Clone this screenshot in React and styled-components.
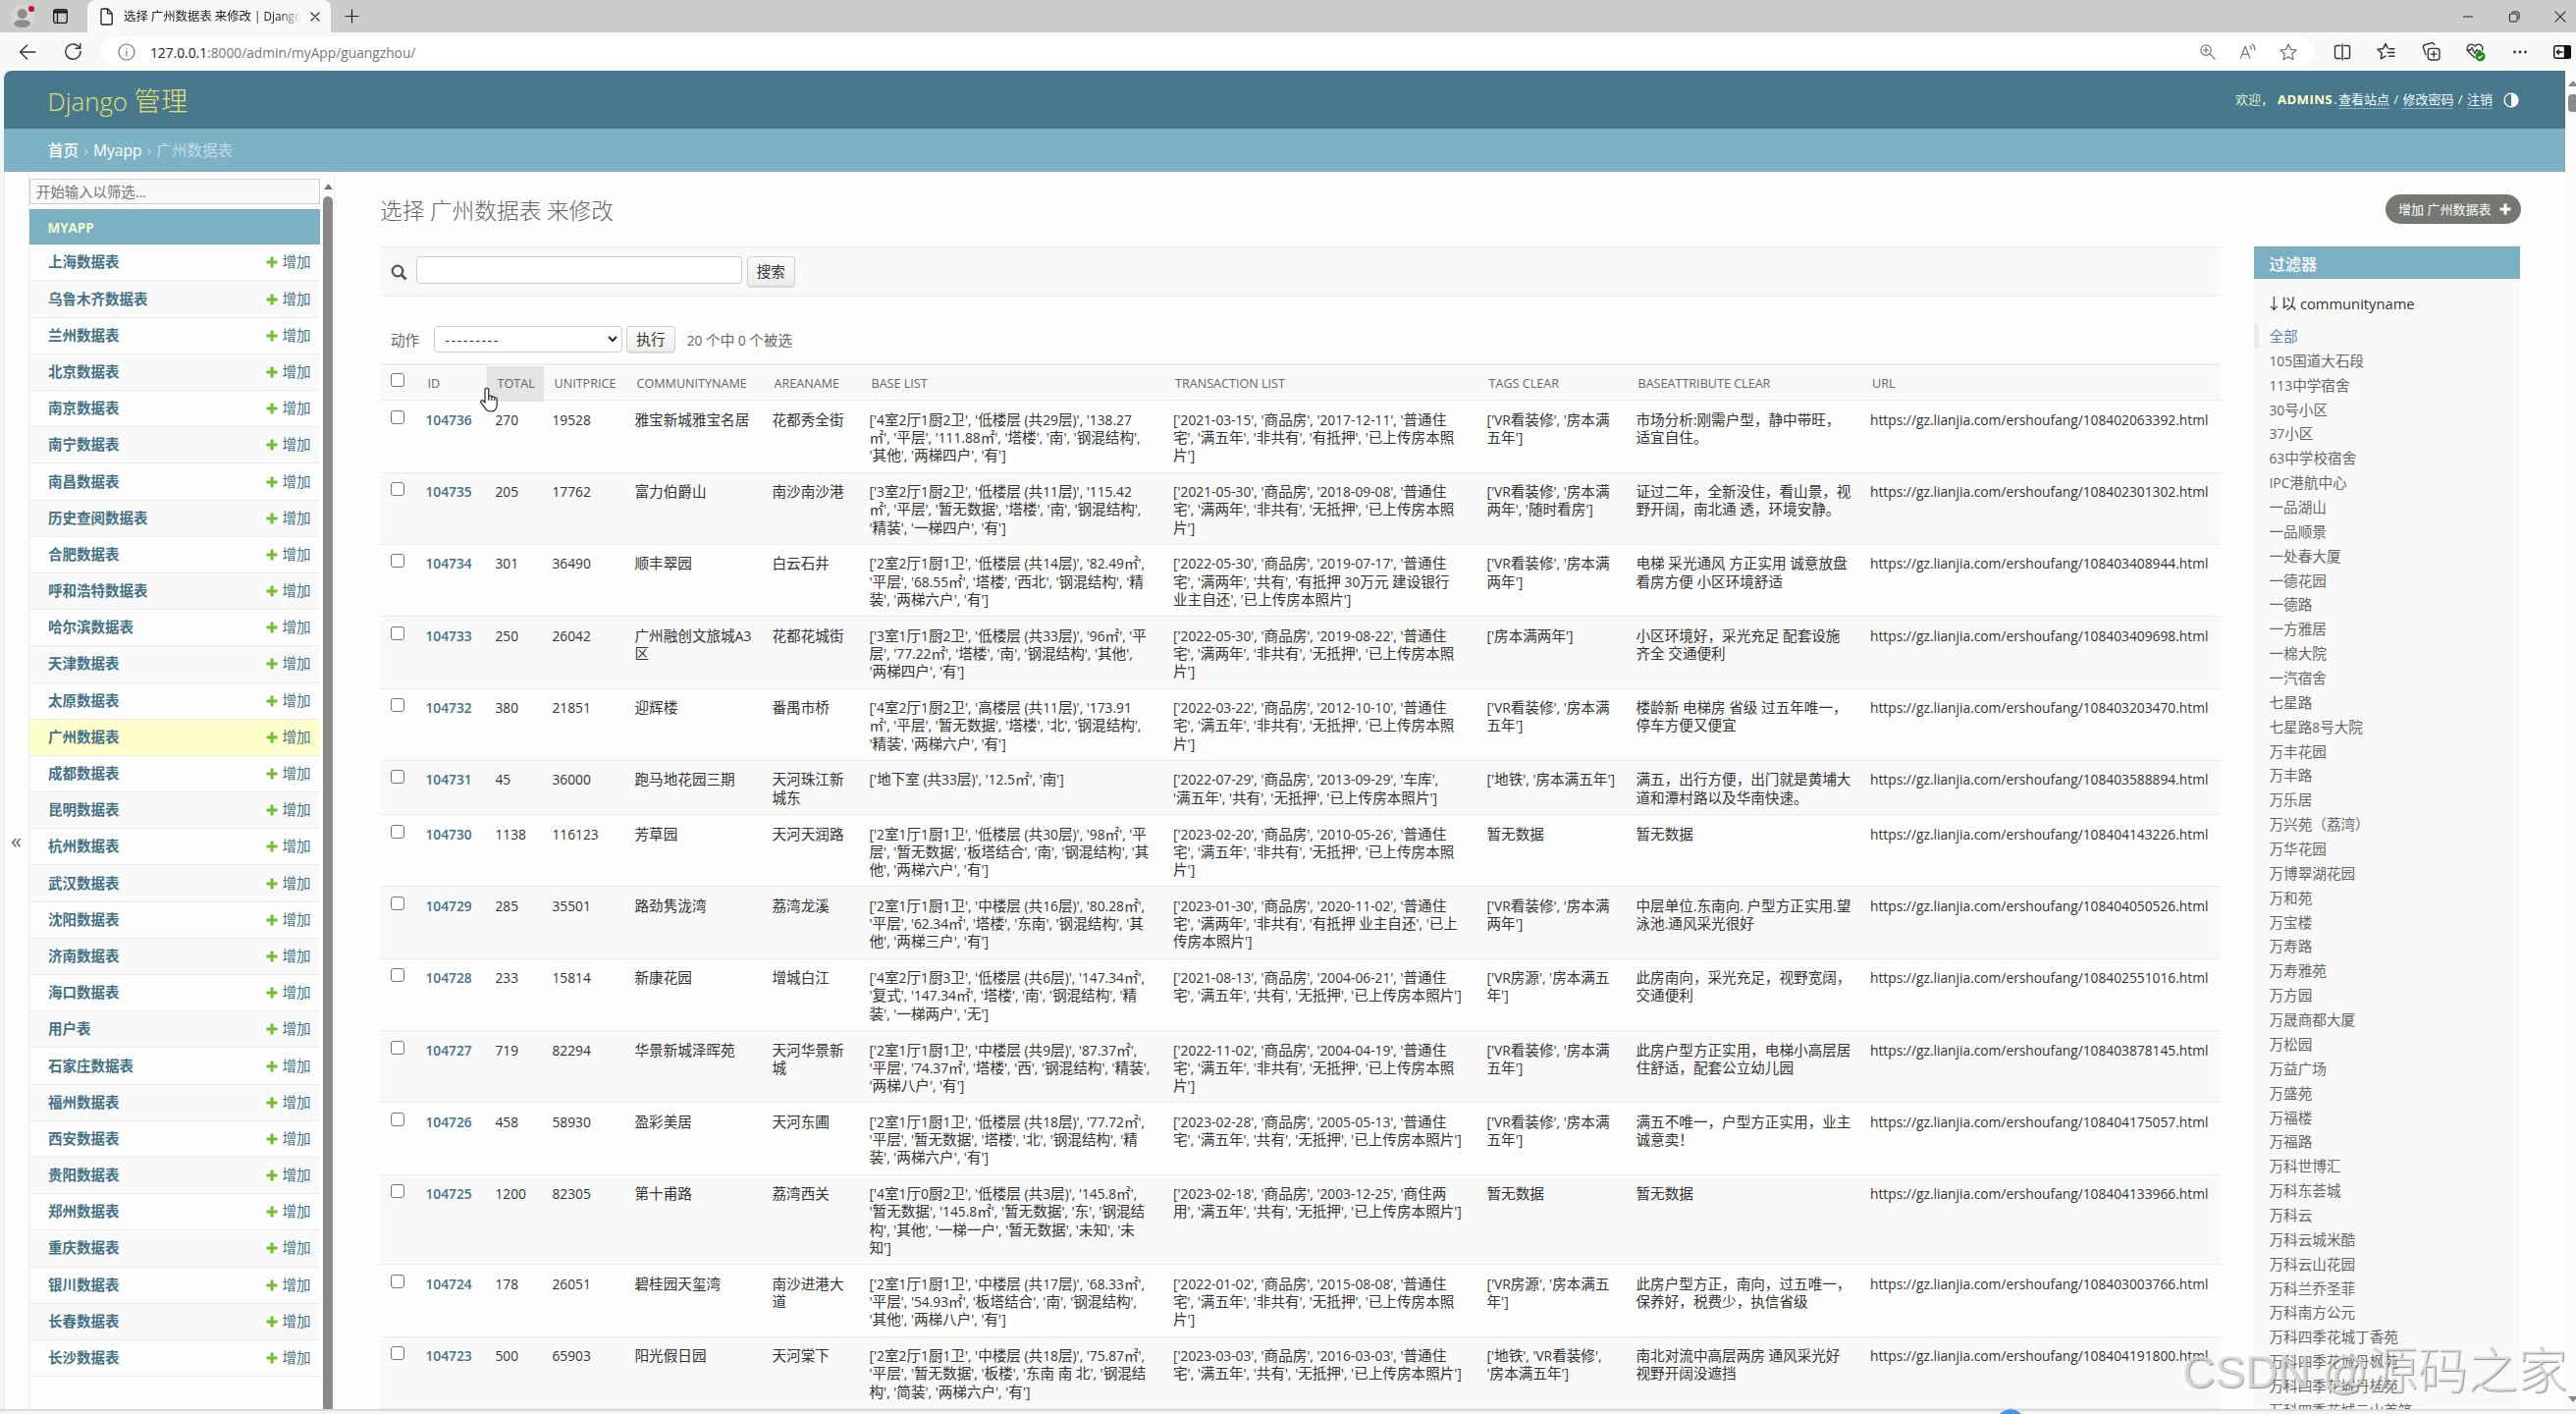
import React, { useState } from "react";
import styled, { createGlobalStyle } from "styled-components";

const GlobalStyle = createGlobalStyle`
  * {
    box-sizing: border-box;
  }
  body {
    margin: 0;
    background: #fdfefd;
    font-family: "Open Sans", "Noto Sans CJK SC", sans-serif;
    font-size: 14.6px;
    color: #333;
  }
  button, input, select {
    font-family: inherit;
  }
`;

const Window = styled.div`
  width: 2624px;
  height: 1440px;
  overflow: hidden;
  display: flex;
  flex-direction: column;
  background: #f5f7f5;
  position: relative;
`;

/* ---------- browser ---------- */

const TabStrip = styled.div`
  height: 33px;
  flex: none;
  display: flex;
  align-items: center;
  background: #cbcdca;
`;

const ProfileIcon = styled.svg`
  margin-left: 10px;
`;

const TabActionsIcon = styled.svg`
  margin-left: 18px;
`;

const BrowserTab = styled.div`
  width: 248px;
  height: 33px;
  margin-left: 20px;
  padding-left: 13px;
  display: flex;
  align-items: center;
  background: #f7f8f7;
  border-radius: 8px 8px 0 0;
`;

const TabTitle = styled.div`
  width: 182px;
  margin-left: 11px;
  margin-right: 7px;
  white-space: nowrap;
  font-size: 12.4px;
  line-height: 20px;
  color: #222;
  mask-image: linear-gradient(to right, #000 160px, transparent 181px);
`;

const NewTabIcon = styled.svg`
  margin-left: 14px;
`;

const WindowButtons = styled.div`
  margin-left: auto;
  padding-right: 9px;
  display: flex;
  align-items: center;
  gap: 33px;
`;

const Toolbar = styled.div`
  height: 39px;
  flex: none;
  display: flex;
  align-items: center;
  background: #f7f8f7;
  padding: 0 0 0 19px;
`;

const ReloadIcon = styled.svg`
  margin-left: 28px;
`;

const AddressBar = styled.div`
  width: 2254px;
  height: 31px;
  margin-left: 19px;
  padding: 0 17.5px 0 17px;
  border-radius: 16px;
  background: #fff;
  display: flex;
  align-items: center;
`;

const Url = styled.div`
  margin-left: 15px;
  font-size: 14.6px;
  line-height: 20px;
  color: #777;

  b {
    font-weight: 400;
    color: #222;
  }
`;

const AddressIcons = styled.div`
  margin-left: auto;
  display: flex;
  align-items: center;
  gap: 24px;
`;

const ToolbarIcons = styled.div`
  margin-left: 19.5px;
  display: flex;
  align-items: center;
  gap: 26.5px;
`;

const Viewport = styled.div`
  height: 1363px;
  flex: none;
  margin-left: 4px;
  display: flex;
  overflow: hidden;
  border-radius: 8px 0 0 0;
  background: #fdfefd;
`;

const PageScroll = styled.div`
  width: 11px;
  padding: 10px 0 7px 3px;
  display: flex;
  flex-direction: column;
  align-items: flex-start;
  gap: 8px;
  background: #fafbfa;
`;

const PageThumb = styled.div`
  width: 10px;
  height: 18px;
  border-radius: 4px;
  background: #888a88;
  margin-bottom: auto;
`;

const BottomEdge = styled.div`
  height: 5px;
  flex: none;
  border-top: 2px solid #d9dbd9;
  background: #f4f5f4;
`;

/* ---------- site ---------- */

const Site = styled.div`
  width: 2609px;
  flex: none;
  display: flex;
  flex-direction: column;
`;

const Header = styled.header`
  height: 59px;
  flex: none;
  padding: 0 47px 0 44.5px;
  display: flex;
  align-items: center;
  justify-content: space-between;
  background: #47788d;
`;

const SiteName = styled.h1`
  margin: 2px 0 0;
  font-weight: 300;
  font-size: 27.3px;
  line-height: 36px;
  color: #e6df6e;
`;

const UserTools = styled.div`
  display: flex;
  align-items: center;
  font-size: 13px;
  line-height: 17px;
  color: #ffc;
  white-space: pre;
`;

const Welcome = styled.span`
  color: #dff0c8;
`;

const UserName = styled.strong`
  margin-left: 4px;
  font-size: 13.2px;
  letter-spacing: 0.4px;
`;

const Separator = styled.span`
  width: ${(p) => p.$width}px;
  text-align: center;
`;

const ToolLink = styled.a`
  color: #f2fbfa;
  border-bottom: 1px solid #8fb0bd;
`;

const ThemeIcon = styled.svg`
  margin-left: 11px;
`;

const Breadcrumbs = styled.div`
  height: 44px;
  flex: none;
  padding: 0 45px;
  display: flex;
  align-items: center;
  gap: 5px;
  background: #7db2c5;
  color: #c4dce8;
  font-size: 15.6px;
  line-height: 22px;

  a {
    color: #fff;
    font-weight: 500;
  }
`;

const Main = styled.div`
  flex: 1;
  min-height: 0;
  display: flex;
`;

const NavToggle = styled.button`
  width: 26px;
  flex: none;
  padding: 100px 1px 0 0;
  border: 0;
  border-left: 1px solid #eceeec;
  border-right: 1px solid #e8eae8;
  background: #fdfefd;
  color: #667;
  font-size: 22px;
`;

const Nav = styled.nav`
  width: 311px;
  flex: none;
  display: flex;
  border-right: 1px solid #ecedec;
`;

const NavBody = styled.div`
  width: 296px;
  flex: none;
  padding-top: 7px;
`;

const NavFilter = styled.input`
  display: block;
  width: 296px;
  height: 26px;
  margin-bottom: 5px;
  padding: 0 6px;
  border: 1px solid #ccc;
  background: #f8f9f8;
  font-size: 14.4px;

  &::placeholder {
    color: #757575;
  }
`;

const NavCaption = styled.div`
  height: 36.3px;
  padding-left: 18.5px;
  background: #7bafc3;
  color: #f0ffcc;
  font-weight: 700;
  font-size: 13.4px;
  line-height: 38px;
`;

const NavItem = styled.div`
  height: 37.2px;
  padding: 0 9.5px 0 19px;
  display: flex;
  align-items: center;
  justify-content: space-between;
  border-bottom: 1px solid #eaebea;
  background: ${(p) => (p.$current ? "#ffffcc" : p.$odd ? "#fdfefd" : "#f8f9f8")};
  color: #447286;
  font-size: 14.5px;
  line-height: 20px;
`;

const NavName = styled.a`
  font-weight: 700;
`;

const NavAdd = styled.a`
  display: flex;
  align-items: center;
  gap: 5px;
`;

const NavScroll = styled.div`
  width: 14px;
  padding: 12px 0 0 2px;
  display: flex;
  flex-direction: column;
  align-items: center;
  gap: 7px;
`;

const NavThumb = styled.div`
  flex: 1;
  width: 10px;
  border-radius: 5px 5px 0 0;
  background: #888a88;
`;

const Content = styled.main`
  flex: 1;
  min-width: 0;
  padding: 0 44px 0 46px;
`;

const TitleRow = styled.div`
  height: 76px;
  padding-right: 1px;
  display: flex;
  justify-content: space-between;
`;

const Title = styled.h2`
  margin: 23px 0 0;
  font-weight: 300;
  font-size: 22.7px;
  line-height: 34px;
  color: #666;
`;

const AddButton = styled.a`
  width: 138px;
  height: 30px;
  margin-top: 22.5px;
  padding: 0 10px 0 13px;
  display: flex;
  align-items: center;
  justify-content: space-between;
  border-radius: 15px;
  background: #757773;
  color: #fff;
  font-size: 13px;
  white-space: nowrap;
`;

const Columns = styled.div`
  display: flex;
  gap: 34px;
  align-items: flex-start;
`;

const ChangeList = styled.section`
  width: 1874.5px;
  flex: none;
`;

const SearchBar = styled.div`
  height: 51px;
  padding: 9px 12px 0 11px;
  display: flex;
  align-items: flex-start;
  border-top: 1px solid #eaebea;
  border-bottom: 1.5px solid #eaebea;
  background: #f8f9f8;
`;

const SearchIcon = styled.svg`
  margin: 8px 9px 0 0;
`;

const SearchInput = styled.input`
  width: 332px;
  height: 28px;
  border: 1px solid #ccc;
  border-radius: 4px;
  background: #fff;
`;

const SmallButton = styled.button`
  width: ${(p) => p.$width}px;
  height: ${(p) => p.$height}px;
  margin-left: 4.5px;
  padding: 0 0 2px;
  border: 1px solid #cfd0cf;
  border-radius: 4px;
  background: linear-gradient(#fbfcfb, #ebedeb);
  box-shadow: 0 1px 1px rgba(0, 0, 0, 0.12);
  color: #333;
  font-size: 14.6px;
`;

const Actions = styled.div`
  height: 68px;
  padding: 19px 11px 0;
  display: flex;
  align-items: center;
  color: #666;
  line-height: 20px;
`;

const ActionSelect = styled.div`
  width: 191.5px;
  height: 27px;
  margin-left: 15px;
  padding: 0 4px 0 10px;
  display: flex;
  align-items: center;
  justify-content: space-between;
  border: 1px solid #ccc;
  border-radius: 4px;
  background: #fff;
  color: #333;
  letter-spacing: 1.5px;
`;

const Counter = styled.span`
  margin-left: 12px;
`;

const GridRow = styled.div`
  display: grid;
  grid-template-columns: 37.5px 71px 58px 84px 140px 99px 309.5px 319.5px 152px 238.5px 365.5px;
`;

const HeadRow = styled(GridRow)`
  height: 38.2px;
  padding-top: 1px;
  border-top: 2px solid #edeeed;
  border-bottom: 1.5px solid #eaebea;
  background: #f8f9f8;
`;

const HeadCell = styled.div`
  padding-left: 11px;
  background: ${(p) => (p.$hover ? "#e3e5e3" : "none")};
  color: #666;
  font-weight: 400;
  font-size: 12.6px;
  line-height: 36px;
  white-space: nowrap;
`;

const BodyRow = styled(GridRow)`
  height: ${(p) => p.$lines * 18.25 + 18.6}px;
  border-bottom: 1.4px solid #e9ebe9;
  background: ${(p) => (p.$odd ? "#fdfefd" : "#f8f9f8")};
`;

const Cell = styled.div`
  padding: 9.5px 0 0 9px;
  font-size: 14.6px;
  line-height: 18.25px;
  white-space: pre;
`;

const IdCell = styled(Cell)`
  color: #447286;
  font-weight: 600;
`;

const Check = styled.input.attrs({ type: "checkbox" })`
  appearance: none;
  display: block;
  width: 14px;
  height: 14px;
  margin: ${(p) => p.$top}px 0 0 11px;
  border: 1px solid #777;
  border-radius: 3px;
  background: #fff;
`;

const FilterPanel = styled.aside`
  width: 271.5px;
  height: 1184px;
  flex: none;
  overflow: hidden;
  background: #f8f9f8;
`;

const FilterHead = styled.div`
  height: 33px;
  padding-left: 16px;
  background: #7bafc3;
  color: #fff;
  font-size: 16.3px;
  font-weight: 500;
  line-height: 36px;
`;

const FilterTitle = styled.div`
  padding: 14px 0 10px 16px;
  font-size: 15.6px;
  line-height: 22px;
  color: #333;
`;

const DownArrow = styled.span`
  display: inline-block;
  width: 9px;
  margin-right: 3px;
  text-indent: -3px;
`;

const FilterItem = styled.a`
  display: block;
  height: 24.86px;
  padding-left: ${(p) => (p.$selected ? 11 : 16)}px;
  border-left: ${(p) => (p.$selected ? "5px solid #e9ebe9" : "0")};
  color: ${(p) => (p.$selected ? "#5b80b2" : "#666")};
  font-size: 14.6px;
  line-height: 24.8px;
  white-space: nowrap;
`;

/* ---------- overlays ---------- */

const Pointer = styled.svg`
  position: absolute;
  left: 488px;
  top: 394px;
`;

const Watermark = styled.div`
  position: absolute;
  left: 2223px;
  top: 1360px;
  display: flex;
  gap: 12px;
  font-family: "Liberation Sans", "Noto Sans CJK SC", sans-serif;
  font-size: 50.8px;
  font-weight: 300;
  line-height: 74px;
  white-space: nowrap;
  color: rgba(232, 233, 232, 0.75);
  text-shadow: 1px 1px 1px rgba(110, 110, 110, 0.75);
`;

const WatermarkLatin = styled.span`
  font-size: 46px;
`;

const BlueDot = styled.div`
  position: absolute;
  left: 2033px;
  top: 1434px;
  width: 30px;
  height: 30px;
  border: 1px solid #e6effa;
  border-radius: 50%;
  background: #4a8fe8;
`;

/* Latin glyphs run a little wide beside the Chinese ones, so they are set smaller.
   The short line-height keeps them from stretching the line. */
const Latin = styled.span`
  font-size: 0.944em;
  line-height: 1;
`;

const Mixed = ({ children }) =>
  children
    .split(/([\x20-\x7e]+)/)
    .filter(Boolean)
    .map((part, i) => (/^[\x20-\x7e]/.test(part) ? <Latin key={i}>{part}</Latin> : part));

const navItems = [
  "上海数据表", "乌鲁木齐数据表", "兰州数据表", "北京数据表", "南京数据表", "南宁数据表",
  "南昌数据表", "历史查阅数据表", "合肥数据表", "呼和浩特数据表", "哈尔滨数据表", "天津数据表",
  "太原数据表", "广州数据表", "成都数据表", "昆明数据表", "杭州数据表", "武汉数据表",
  "沈阳数据表", "济南数据表", "海口数据表", "用户表", "石家庄数据表", "福州数据表",
  "西安数据表", "贵阳数据表", "郑州数据表", "重庆数据表", "银川数据表", "长春数据表",
  "长沙数据表",
];

const headers = [
  "ID", "TOTAL", "UNITPRICE", "COMMUNITYNAME", "AREANAME", "BASE LIST",
  "TRANSACTION LIST", "TAGS CLEAR", "BASEATTRIBUTE CLEAR", "URL",
];

const rows = [
  ["104736", "270", "19528", "雅宝新城雅宝名居", "花都秀全街",
    "['4室2厅1厨2卫', '低楼层 (共29层)', '138.27\n㎡', '平层', '111.88㎡', '塔楼', '南', '钢混结构',\n'其他', '两梯四户', '有']",
    "['2021-03-15', '商品房', '2017-12-11', '普通住\n宅', '满五年', '非共有', '有抵押', '已上传房本照\n片']",
    "['VR看装修', '房本满\n五年']", "市场分析:刚需户型，静中带旺，\n适宜自住。", "108402063392"],
  ["104735", "205", "17762", "富力伯爵山", "南沙南沙港",
    "['3室2厅1厨2卫', '低楼层 (共11层)', '115.42\n㎡', '平层', '暂无数据', '塔楼', '南', '钢混结构',\n'精装', '一梯四户', '有']",
    "['2021-05-30', '商品房', '2018-09-08', '普通住\n宅', '满两年', '非共有', '无抵押', '已上传房本照\n片']",
    "['VR看装修', '房本满\n两年', '随时看房']", "证过二年，全新没住，看山景，视\n野开阔，南北通 透，环境安静。", "108402301302"],
  ["104734", "301", "36490", "顺丰翠园", "白云石井",
    "['2室2厅1厨1卫', '低楼层 (共14层)', '82.49㎡',\n'平层', '68.55㎡', '塔楼', '西北', '钢混结构', '精\n装', '两梯六户', '有']",
    "['2022-05-30', '商品房', '2019-07-17', '普通住\n宅', '满两年', '共有', '有抵押 30万元 建设银行\n业主自还', '已上传房本照片']",
    "['VR看装修', '房本满\n两年']", "电梯 采光通风 方正实用 诚意放盘\n看房方便 小区环境舒适", "108403408944"],
  ["104733", "250", "26042", "广州融创文旅城A3\n区", "花都花城街",
    "['3室1厅1厨2卫', '低楼层 (共33层)', '96㎡', '平\n层', '77.22㎡', '塔楼', '南', '钢混结构', '其他',\n'两梯四户', '有']",
    "['2022-05-30', '商品房', '2019-08-22', '普通住\n宅', '满两年', '非共有', '无抵押', '已上传房本照\n片']",
    "['房本满两年']", "小区环境好，采光充足 配套设施\n齐全 交通便利", "108403409698"],
  ["104732", "380", "21851", "迎辉楼", "番禺市桥",
    "['4室2厅1厨2卫', '高楼层 (共11层)', '173.91\n㎡', '平层', '暂无数据', '塔楼', '北', '钢混结构',\n'精装', '两梯六户', '有']",
    "['2022-03-22', '商品房', '2012-10-10', '普通住\n宅', '满五年', '非共有', '无抵押', '已上传房本照\n片']",
    "['VR看装修', '房本满\n五年']", "楼龄新 电梯房 省级 过五年唯一，\n停车方便又便宜", "108403203470"],
  ["104731", "45", "36000", "跑马地花园三期", "天河珠江新\n城东",
    "['地下室 (共33层)', '12.5㎡', '南']",
    "['2022-07-29', '商品房', '2013-09-29', '车库',\n'满五年', '共有', '无抵押', '已上传房本照片']",
    "['地铁', '房本满五年']", "满五，出行方便，出门就是黄埔大\n道和潭村路以及华南快速。", "108403588894"],
  ["104730", "1138", "116123", "芳草园", "天河天润路",
    "['2室1厅1厨1卫', '低楼层 (共30层)', '98㎡', '平\n层', '暂无数据', '板塔结合', '南', '钢混结构', '其\n他', '两梯六户', '有']",
    "['2023-02-20', '商品房', '2010-05-26', '普通住\n宅', '满五年', '非共有', '无抵押', '已上传房本照\n片']",
    "暂无数据", "暂无数据", "108404143226"],
  ["104729", "285", "35501", "路劲隽泷湾", "荔湾龙溪",
    "['2室1厅1厨1卫', '中楼层 (共16层)', '80.28㎡',\n'平层', '62.34㎡', '塔楼', '东南', '钢混结构', '其\n他', '两梯三户', '有']",
    "['2023-01-30', '商品房', '2020-11-02', '普通住\n宅', '满两年', '非共有', '有抵押 业主自还', '已上\n传房本照片']",
    "['VR看装修', '房本满\n两年']", "中层单位.东南向. 户型方正实用.望\n泳池.通风采光很好", "108404050526"],
  ["104728", "233", "15814", "新康花园", "增城白江",
    "['4室2厅1厨3卫', '低楼层 (共6层)', '147.34㎡',\n'复式', '147.34㎡', '塔楼', '南', '钢混结构', '精\n装', '一梯两户', '无']",
    "['2021-08-13', '商品房', '2004-06-21', '普通住\n宅', '满五年', '共有', '无抵押', '已上传房本照片']",
    "['VR房源', '房本满五\n年']", "此房南向，采光充足，视野宽阔，\n交通便利", "108402551016"],
  ["104727", "719", "82294", "华景新城泽晖苑", "天河华景新\n城",
    "['2室1厅1厨1卫', '中楼层 (共9层)', '87.37㎡',\n'平层', '74.37㎡', '塔楼', '西', '钢混结构', '精装',\n'两梯八户', '有']",
    "['2022-11-02', '商品房', '2004-04-19', '普通住\n宅', '满五年', '非共有', '无抵押', '已上传房本照\n片']",
    "['VR看装修', '房本满\n五年']", "此房户型方正实用，电梯小高层居\n住舒适，配套公立幼儿园", "108403878145"],
  ["104726", "458", "58930", "盈彩美居", "天河东圃",
    "['2室1厅1厨1卫', '低楼层 (共18层)', '77.72㎡',\n'平层', '暂无数据', '塔楼', '北', '钢混结构', '精\n装', '两梯六户', '有']",
    "['2023-02-28', '商品房', '2005-05-13', '普通住\n宅', '满五年', '共有', '无抵押', '已上传房本照片']",
    "['VR看装修', '房本满\n五年']", "满五不唯一，户型方正实用，业主\n诚意卖！", "108404175057"],
  ["104725", "1200", "82305", "第十甫路", "荔湾西关",
    "['4室1厅0厨2卫', '低楼层 (共3层)', '145.8㎡',\n'暂无数据', '145.8㎡', '暂无数据', '东', '钢混结\n构', '其他', '一梯一户', '暂无数据', '未知', '未\n知']",
    "['2023-02-18', '商品房', '2003-12-25', '商住两\n用', '满五年', '共有', '无抵押', '已上传房本照片']",
    "暂无数据", "暂无数据", "108404133966"],
  ["104724", "178", "26051", "碧桂园天玺湾", "南沙进港大\n道",
    "['2室1厅1厨1卫', '中楼层 (共17层)', '68.33㎡',\n'平层', '54.93㎡', '板塔结合', '南', '钢混结构',\n'其他', '两梯八户', '有']",
    "['2022-01-02', '商品房', '2015-08-08', '普通住\n宅', '满五年', '非共有', '无抵押', '已上传房本照\n片']",
    "['VR房源', '房本满五\n年']", "此房户型方正，南向，过五唯一，\n保养好，税费少，执信省级", "108403003766"],
  ["104723", "500", "65903", "阳光假日园", "天河棠下",
    "['2室2厅1厨1卫', '中楼层 (共18层)', '75.87㎡',\n'平层', '暂无数据', '板楼', '东南 南 北', '钢混结\n构', '简装', '两梯六户', '有']",
    "['2023-03-03', '商品房', '2016-03-03', '普通住\n宅', '满五年', '共有', '无抵押', '已上传房本照片']",
    "['地铁', 'VR看装修',\n'房本满五年']", "南北对流中高层两房 通风采光好\n视野开阔没遮挡", "108404191800"],
];

const filters = [
  "全部", "105国道大石段", "113中学宿舍", "30号小区", "37小区", "63中学校宿舍", "IPC港航中心",
  "一品湖山", "一品顺景", "一处春大厦", "一德花园", "一德路", "一方雅居", "一棉大院", "一汽宿舍",
  "七星路", "七星路8号大院", "万丰花园", "万丰路", "万乐居", "万兴苑（荔湾）", "万华花园",
  "万博翠湖花园", "万和苑", "万宝楼", "万寿路", "万寿雅苑", "万方园", "万晟商都大厦", "万松园",
  "万益广场", "万盛苑", "万福楼", "万福路", "万科世博汇", "万科东荟城", "万科云",
  "万科云城米酷", "万科云山花园", "万科兰乔圣菲", "万科南方公元", "万科四季花城丁香苑",
  "万科四季花城丹枫苑", "万科四季花城丹桂苑", "万科四季花城云山首筑",
];

const lineCount = (row) => Math.max(...row.map((v) => v.split("\n").length), 2);

const Line = ({ size = 18, color = "#333", w = 1.3, children, ...rest }) => (
  <svg width={size} height={size} viewBox="0 0 18 18" fill="none" stroke={color} strokeWidth={w} strokeLinecap="round" strokeLinejoin="round" {...rest}>
    {children}
  </svg>
);

const PlusIcon = ({ size, color }) => (
  <svg width={size} height={size} viewBox="0 0 12 12" fill={color}>
    <path d="M4.5 0.5h3v4h4v3h-4v4h-3v-4h-4v-3h4z" />
  </svg>
);

const Browser = () => (
  <>
    <TabStrip>
      <ProfileIcon width="26" height="26" viewBox="0 0 26 26">
        <circle cx="13" cy="13" r="12" fill="#d5d6d4" />
        <circle cx="12.7" cy="10" r="5" fill="#8f8d8b" />
        <path d="M4.5 20c0-3 4-3.700 8.200-3.700s8.200.7 8.200 3.700c0 2.500-4 4-8.200 4s-8.200-1.500-8.200-4z" fill="#8f8d8b" />
        <circle cx="22" cy="5" r="3.100" fill="#c3142d" />
      </ProfileIcon>
      <TabActionsIcon width="15" height="15" viewBox="0 0 15 15" fill="none" stroke="#1d1d1d" strokeWidth="1.300">
        <rect x="0.700" y="0.700" width="13.600" height="13.600" rx="2" />
        <path d="M1 2.500h13M4.500 4v10" />
        <path d="M1 3h13" strokeWidth="3" />
      </TabActionsIcon>
      <BrowserTab>
        <svg width="13" height="18" viewBox="0 0 13 18" fill="none" stroke="#222" strokeWidth="1.300" strokeLinejoin="round">
          <path d="M2.200 1h5.600l4.400 4.600v10.200a1.200 1.200 0 0 1-1.200 1.200H2.200A1.200 1.200 0 0 1 1 15.800V2.200A1.200 1.200 0 0 1 2.200 1z" />
          <path d="M7.600 1v4.800h4.600" />
        </svg>
        <TabTitle>
          <Mixed>选择 广州数据表 来修改 | Django</Mixed>
        </TabTitle>
        <Line size={12} w={1.9}>
          <path d="M3 3l12 12M15 3L3 15" />
        </Line>
      </BrowserTab>
      <NewTabIcon width="15" height="15" viewBox="0 0 15 15" stroke="#222" strokeWidth="1.200">
        <path d="M7.500 0.500v14M0.500 7.500h14" />
      </NewTabIcon>
      <WindowButtons>
        <Line size={14} color="#222">
          <path d="M3 9h12" />
        </Line>
        <Line size={14} color="#222">
          <rect x="3" y="5" width="10" height="10.500" rx="2" />
          <path d="M6 2.500h6.500a3 3 0 0 1 3 3V12" />
        </Line>
        <Line size={14} color="#222">
          <path d="M2.500 2.500l13 13M15.500 2.500l-13 13" />
        </Line>
      </WindowButtons>
    </TabStrip>
    <Toolbar>
      <Line size={18}>
        <path d="M17 9H1.500M8.500 2L1.500 9l7 7" />
      </Line>
      <ReloadIcon width="19" height="19" viewBox="0 0 19 19" fill="none" stroke="#333" strokeWidth="1.400" strokeLinecap="round" strokeLinejoin="round">
        <path d="M17 9.500A7.600 7.600 0 1 1 14.300 3.800L16.500 6" />
        <path d="M16.800 1.500V6.200H12" />
      </ReloadIcon>
      <AddressBar>
        <Line size={18} color="#777" w={1.2}>
          <circle cx="9" cy="9" r="8" />
          <path d="M9 8.200v4.500M9 5.400v.2" />
        </Line>
        <Url>
          <Latin>
            <b>127.0.0.1</b>:8000/admin/myApp/guangzhou/
          </Latin>
        </Url>
        <AddressIcons>
          <Line size={17} color="#777">
            <circle cx="7.500" cy="7.500" r="5.500" />
            <path d="M11.700 11.700L17 17M7.500 5v5M5 7.500h5" />
          </Line>
          <Line size={17} color="#777">
            <path d="M1.500 16L6.500 3.500 11.500 16M3.300 12h6.500M11.500 3c1 .8 1.500 1.800 1.500 3.500M14 1c1.800 1.500 2.700 3.300 2.700 6.500" />
          </Line>
          <Line size={18} color="#777">
            <path d="M9 1l2.400 5.300 5.600.6-4.200 3.900 1.200 5.900L9 13.900l-5 2.800 1.200-5.900L1 6.900l5.600-.6z" />
          </Line>
        </AddressIcons>
      </AddressBar>
      <ToolbarIcons>
        <Line size={18} w={1.4}>
          <path d="M7 2.500H3a1.500 1.500 0 0 0-1.500 1.500v10A1.500 1.500 0 0 0 3 15.500h4M11 2.500h4a1.500 1.500 0 0 1 1.500 1.500v10a1.500 1.500 0 0 1-1.500 1.500h-4M9 1v16" />
        </Line>
        <Line size={19} w={1.4}>
          <path d="M10.500 5.500L8.500 1.500 6.300 6.200 1 6.900l3.900 3.600L4 16l4.500-2.600M12 6.500h5M10.500 10H17M12 13.500h5" />
        </Line>
        <Line size={19} w={1.3}>
          <rect x="6" y="6" width="11" height="11" rx="2.500" />
          <path d="M11.500 8.800v5.400M8.800 11.500h5.400M3.800 12.200L1.500 5.400C1 4 1.600 3 2.800 2.600l6.300-1.800c1.300-.4 2.500.2 3 1.500" />
        </Line>
        <svg width="20" height="20" viewBox="0 0 20 20" fill="none" stroke="#333" strokeWidth="1.300" strokeLinejoin="round">
          <path d="M9 16L2.500 9.500C0.500 7.300 1 4.200 3 2.900c2-1.300 4.300-.7 6 1.300 1.700-2 4-2.600 6-1.300 1.700 1.200 2.200 3.600 1.200 5.600" />
          <path d="M0.500 8h4l1.500-2.500 3 6 2-4 1 1.500h3" />
          <circle cx="14.500" cy="14.500" r="5" fill="#1c8a24" stroke="none" />
          <path d="M12.300 14.600l1.600 1.600 2.900-3" stroke="#e9ffe9" />
        </svg>
        <svg width="16" height="18" viewBox="0 0 16 18" fill="#333">
          <circle cx="2.500" cy="9" r="1.400" />
          <circle cx="8" cy="9" r="1.400" />
          <circle cx="13.500" cy="9" r="1.400" />
        </svg>
        <svg width="18" height="14" viewBox="0 0 18 14" fill="none" stroke="#111" strokeWidth="1.400">
          <rect x="0.700" y="0.700" width="16.600" height="12.600" rx="2" />
          <path d="M11.500 1h4.500a1.500 1.500 0 0 1 1.500 1.500v9a1.500 1.500 0 0 1-1.500 1.500h-4.500z" fill="#111" />
          <path d="M9.500 7H3.500M6 4.500L3.500 7 6 9.500" />
        </svg>
      </ToolbarIcons>
    </Toolbar>
  </>
);

const Sidebar = () => (
  <Nav>
    <NavBody>
      <NavFilter placeholder="开始输入以筛选..." />
      <NavCaption>MYAPP</NavCaption>
      {navItems.map((name, i) => (
        <NavItem key={name} $odd={i % 2 === 0} $current={name === "广州数据表"}>
          <NavName>{name}</NavName>
          <NavAdd>
            <PlusIcon size={12} color="#70bf2b" />
            增加
          </NavAdd>
        </NavItem>
      ))}
    </NavBody>
    <NavScroll>
      <svg width="9" height="6" viewBox="0 0 9 6" fill="#777">
        <path d="M0 6L4.500 0 9 6z" />
      </svg>
      <NavThumb />
    </NavScroll>
  </Nav>
);

const ResultTable = () => {
  const [checked, setChecked] = useState([]);

  const toggle = (id) => () =>
    setChecked((ids) => (ids.includes(id) ? ids.filter((x) => x !== id) : [...ids, id]));

  return (
    <>
      <Actions>
        动作
        <ActionSelect>
          ---------
          <svg width="10" height="7" viewBox="0 0 10 7" fill="none" stroke="#222" strokeWidth="2">
            <path d="M1 1l4 4 4-4" />
          </svg>
        </ActionSelect>
        <SmallButton $width={49.5} $height={27}>执行</SmallButton>
        <Counter>
          <Mixed>{`20 个中 ${checked.length} 个被选`}</Mixed>
        </Counter>
      </Actions>
      <HeadRow>
        <Check $top={7} readOnly checked={false} />
        {headers.map((h) => (
          <HeadCell key={h} $hover={h === "TOTAL"}>
            {h}
          </HeadCell>
        ))}
      </HeadRow>
      {rows.map((row, i) => {
        const [id, ...cells] = row;
        const link = cells.pop();
        return (
          <BodyRow key={id} $lines={lineCount(row)} $odd={i % 2 === 0}>
            <Check $top={9.5} checked={checked.includes(id)} onChange={toggle(id)} />
            <IdCell>
              <Mixed>{id}</Mixed>
            </IdCell>
            {cells.map((c, n) => (
              <Cell key={n}>
                {c.split("\n").map((line, k) => (
                  <div key={k}>
                    <Mixed>{line}</Mixed>
                  </div>
                ))}
              </Cell>
            ))}
            <Cell>
              <Mixed>{`https://gz.lianjia.com/ershoufang/${link}.html`}</Mixed>
            </Cell>
          </BodyRow>
        );
      })}
    </>
  );
};

const App = () => (
  <Window>
    <GlobalStyle />
    <Browser />
    <Viewport>
      <Site>
        <Header>
          <SiteName>
            <Mixed>Django 管理</Mixed>
          </SiteName>
          <UserTools>
            <Welcome>欢迎，</Welcome>
            <UserName>ADMINS</UserName>
            <Separator $width={6}>.</Separator>
            <ToolLink>查看站点</ToolLink>
            <Separator $width={13.5}>/</Separator>
            <ToolLink>修改密码</ToolLink>
            <Separator $width={13.5}>/</Separator>
            <ToolLink>注销</ToolLink>
            <ThemeIcon width="16" height="16" viewBox="0 0 16 16">
              <circle cx="8" cy="8" r="6.900" fill="none" stroke="#fff" strokeWidth="1.400" />
              <path d="M8 1a7 7 0 0 1 0 14z" fill="#fff" />
            </ThemeIcon>
          </UserTools>
        </Header>
        <Breadcrumbs>
          <a>首页</a>
          <span>›</span>
          <a>Myapp</a>
          <span>›</span>
          广州数据表
        </Breadcrumbs>
        <Main>
          <NavToggle>«</NavToggle>
          <Sidebar />
          <Content>
            <TitleRow>
              <Title>
                <Mixed>选择 广州数据表 来修改</Mixed>
              </Title>
              <AddButton>
                增加 广州数据表
                <PlusIcon size={12} color="#fff" />
              </AddButton>
            </TitleRow>
            <Columns>
              <ChangeList>
                <SearchBar>
                  <SearchIcon width="17" height="17" viewBox="0 0 17 17" fill="none" stroke="#555" strokeWidth="2.200">
                    <circle cx="7" cy="7" r="5.300" />
                    <path d="M10.800 10.800L15.500 15.500" strokeWidth="2.800" />
                  </SearchIcon>
                  <SearchInput />
                  <SmallButton $width={49.5} $height={31}>搜索</SmallButton>
                </SearchBar>
                <ResultTable />
              </ChangeList>
              <FilterPanel>
                <FilterHead>过滤器</FilterHead>
                <FilterTitle>
                  <DownArrow>↓</DownArrow>
                  <Mixed>以 communityname</Mixed>
                </FilterTitle>
                {filters.map((f, i) => (
                  <FilterItem key={f} $selected={i === 0}>
                    <Mixed>{f}</Mixed>
                  </FilterItem>
                ))}
              </FilterPanel>
            </Columns>
          </Content>
        </Main>
      </Site>
      <PageScroll>
        <svg width="8" height="6" viewBox="0 0 8 6" fill="#888">
          <path d="M0 6L5 0l5 6z" />
        </svg>
        <PageThumb />
        <svg width="8" height="6" viewBox="0 0 8 6" fill="#888">
          <path d="M0 0h10L5 6z" />
        </svg>
      </PageScroll>
    </Viewport>
    <BottomEdge />
    <BlueDot />
    <Pointer width="20" height="27" viewBox="0 0 20 27" fill="#fff" stroke="#222" strokeWidth="1.200" strokeLinejoin="round">
      <path d="M6 16V3.200a1.900 1.900 0 0 1 3.800 0V10c.4-1.500 3-1.300 3 .4.6-1 2.800-.8 2.900.8.800-.8 2.500-.3 2.500 1.300v5.500c0 4-2.200 7-6 7-3.600 0-5.200-1.700-6.700-4.300L2 16.300c-1-1.900 1.200-3.300 2.500-1.900z" />
      <path d="M9.800 10v4M12.800 10.500V14M15.700 11.500V14" fill="none" />
    </Pointer>
    <Watermark>
      <WatermarkLatin>CSDN</WatermarkLatin>
      <span>
        <WatermarkLatin>@</WatermarkLatin>源码之家
      </span>
    </Watermark>
  </Window>
);

export default App;
